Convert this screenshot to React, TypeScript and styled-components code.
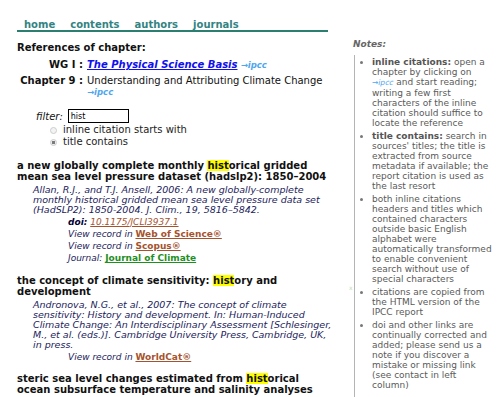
import React from 'react'
import styled, { createGlobalStyle } from 'styled-components'

const GlobalStyle = createGlobalStyle`
  body {
    margin: 0;
    background: #ffffff;
    font-family: "DejaVu Sans", Verdana, sans-serif;
    color: #111111;
  }
`

const Page = styled.div`
  display: grid;
  grid-template-columns: 317px 1fr;
  column-gap: 19px;
  padding-left: 17px;
  height: 397px;
  overflow: hidden;
`

const Main = styled.main`
  display: flex;
  flex-direction: column;
`

const Nav = styled.nav`
  display: flex;
  gap: 15px;
  width: 304px;
  padding: 19px 0 0 7px;
  border-bottom: 2px solid #2a7f70;
  line-height: 11px;
`

const NavLink = styled.a`
  font-size: 10px;
  font-weight: bold;
  color: #338383;
  text-decoration: none;
`

const Heading = styled.h3`
  margin: 10px 0 0;
  font-size: 10px;
  line-height: 12px;
  font-weight: bold;
`

const ChapterGrid = styled.dl`
  display: grid;
  grid-template-columns: 66px 1fr;
  column-gap: 4px;
  row-gap: 4px;
  margin: 5px 0 0;
  font-size: 10px;
  line-height: 12px;
`

const Label = styled.dt`
  margin: 0;
  font-weight: bold;
  text-align: right;
`

const Value = styled.dd`
  margin: 0;
`

const BookLink = styled.a`
  color: #1010f0;
  font-weight: bold;
  font-style: italic;
  text-decoration: underline;
`

const Ipcc = styled.a<{ $block?: boolean; $small?: boolean }>`
  display: ${p => (p.$block ? 'block' : 'inline')};
  font-size: ${p => (p.$small ? '7.5px' : '8.5px')};
  font-weight: ${p => (p.$small ? 'normal' : 'bold')};
  line-height: 10px;
  font-style: italic;
  color: #4ea6ee;
  text-decoration: none;
`

const FilterRow = styled.div`
  display: flex;
  align-items: center;
  gap: 5px;
  height: 14px;
  margin: 12px 0 0 19px;
`

const FilterLabel = styled.label`
  font-size: 10px;
  font-style: italic;
`

const FilterInput = styled.input`
  box-sizing: border-box;
  width: 61px;
  height: 14px;
  padding: 0 2px;
  border: 1px solid #000;
  font: 8px "DejaVu Sans", sans-serif;
  outline: none;
`

const RadioList = styled.div`
  display: flex;
  flex-direction: column;
  margin: 1px 0 0 33px;
`

const RadioRow = styled.label`
  display: flex;
  align-items: center;
  gap: 6px;
  font-size: 10px;
  line-height: 12px;
  color: #222;
`

const Radio = styled.input`
  appearance: none;
  box-sizing: border-box;
  width: 7px;
  height: 7px;
  margin: 0;
  border-radius: 50%;
  border: 1px solid #cccccc;
  background: #f3f3f3;
  &:checked {
    background: radial-gradient(circle, #7a7a7a 0 1.4px, #eeeeee 2px);
  }
`

const Result = styled.article<{ $first?: boolean }>`
  margin-top: ${p => (p.$first ? '11.5px' : '10px')};
`

const Title = styled.h4`
  margin: 0;
  font-size: 10px;
  line-height: 11px;
  font-weight: bold;
  color: #111;
`

const Hit = styled.span`
  background: #ffff00;
`

const Citation = styled.p`
  margin: 3px 0 0 16px;
  font-size: 9.5px;
  line-height: 10px;
  font-style: italic;
  color: #1c1c5c;
`

const Links = styled.div`
  margin: 1px 0 0 51px;
  font-size: 9px;
  line-height: 12.3px;
  font-style: italic;
  color: #1c1c5c;
`

const Doi = styled.b`
  color: #000033;
`

const Ext = styled.a<{ $tone?: 'rust' | 'green'; $plain?: boolean }>`
  color: ${p => (p.$tone === 'green' ? '#1f8f1f' : '#a5532e')};
  font-weight: ${p => (p.$plain ? 'normal' : 'bold')};
  font-style: ${p => (p.$plain ? 'italic' : 'normal')};
  text-decoration: underline;
`

const Aside = styled.aside`
  position: relative;
  display: flex;
  flex-direction: column;
  font-size: 9px;
  line-height: 10px;
  color: #5a5a5a;
`

const NotesTitle = styled.div`
  margin-top: 39px;
  font-weight: bold;
  font-style: italic;
  line-height: 11px;
  color: #666;
`

const NotesList = styled.ul`
  flex: 1;
  margin: 5px 0 0 1px;
  padding: 2px 6px 0 17px;
  border-left: 1px solid #b4b4b4;
  li + li {
    margin-top: 3px;
  }
  li::marker {
    color: #777;
  }
`

const Strong = styled.b`
  color: #555;
`

const Mark = styled.span`
  position: absolute;
  left: -4px;
  top: 283px;
  font-size: 6px;
  color: #b8e0b0;
`

export default function App() {
  return (
    <>
      <GlobalStyle />
      <Page>
        <Main>
          <Nav>
            <NavLink href="#">home</NavLink>
            <NavLink href="#">contents</NavLink>
            <NavLink href="#">authors</NavLink>
            <NavLink href="#">journals</NavLink>
          </Nav>

          <Heading>References of chapter:</Heading>
          <ChapterGrid>
            <Label>WG I :</Label>
            <Value>
              <BookLink href="#">The Physical Science Basis</BookLink> <Ipcc href="#">→ipcc</Ipcc>
            </Value>
            <Label>Chapter 9 :</Label>
            <Value>
              Understanding and Attributing Climate Change
              <Ipcc href="#" $block>→ipcc</Ipcc>
            </Value>
          </ChapterGrid>

          <FilterRow>
            <FilterLabel htmlFor="flt">filter:</FilterLabel>
            <FilterInput id="flt" defaultValue="hist" />
          </FilterRow>
          <RadioList>
            <RadioRow>
              <Radio type="radio" name="mode" />
              inline citation starts with
            </RadioRow>
            <RadioRow>
              <Radio type="radio" name="mode" defaultChecked />
              title contains
            </RadioRow>
          </RadioList>

          <Result $first>
            <Title>
              a new globally complete monthly <Hit>hist</Hit>orical gridded mean sea level pressure dataset (hadslp2): 1850–2004
            </Title>
            <Citation>
              Allan, R.J., and T.J. Ansell, 2006: A new globally-complete monthly historical gridded mean sea level pressure data set
              (HadSLP2): 1850-2004. J. Clim., 19, 5816–5842.
            </Citation>
            <Links>
              <div>
                <Doi>doi:</Doi> <Ext href="#" $plain>10.1175/JCLI3937.1</Ext>
              </div>
              <div>
                View record in <Ext href="#">Web of Science®</Ext>
              </div>
              <div>
                View record in <Ext href="#">Scopus®</Ext>
              </div>
              <div>
                Journal: <Ext href="#" $tone="green">Journal of Climate</Ext>
              </div>
            </Links>
          </Result>

          <Result>
            <Title>
              the concept of climate sensitivity: <Hit>hist</Hit>ory and development
            </Title>
            <Citation>
              Andronova, N.G., et al., 2007: The concept of climate sensitivity: History and development. In: Human-Induced
              Climate Change: An Interdisciplinary Assessment [Schlesinger, M., et al. (eds.)]. Cambridge University Press,
              Cambridge, UK, in press.
            </Citation>
            <Links>
              <div>
                View record in <Ext href="#">WorldCat®</Ext>
              </div>
            </Links>
          </Result>

          <Result>
            <Title>
              steric sea level changes estimated from <Hit>hist</Hit>orical ocean subsurface temperature and salinity analyses
            </Title>
          </Result>
        </Main>

        <Aside>
          <NotesTitle>Notes:</NotesTitle>
          <Mark>x</Mark>
          <NotesList>
            <li>
              <Strong>inline citations:</Strong> open a chapter by clicking on{' '}
              <Ipcc href="#" $small>
                →ipcc
              </Ipcc>{' '}
              and start reading; writing a few first characters of the inline citation should suffice to locate the reference
            </li>
            <li>
              <Strong>title contains:</Strong> search in sources' titles; the title is extracted from source metadata if
              available; the report citation is used as the last resort
            </li>
            <li>
              both inline citations headers and titles which contained characters outside basic English alphabet were
              automatically transformed to enable convenient search without use of special characters
            </li>
            <li>citations are copied from the HTML version of the IPCC report</li>
            <li>
              doi and other links are continually corrected and added; please send us a note if you discover a mistake or
              missing link (see contact in left column)
            </li>
          </NotesList>
        </Aside>
      </Page>
    </>
  )
}
